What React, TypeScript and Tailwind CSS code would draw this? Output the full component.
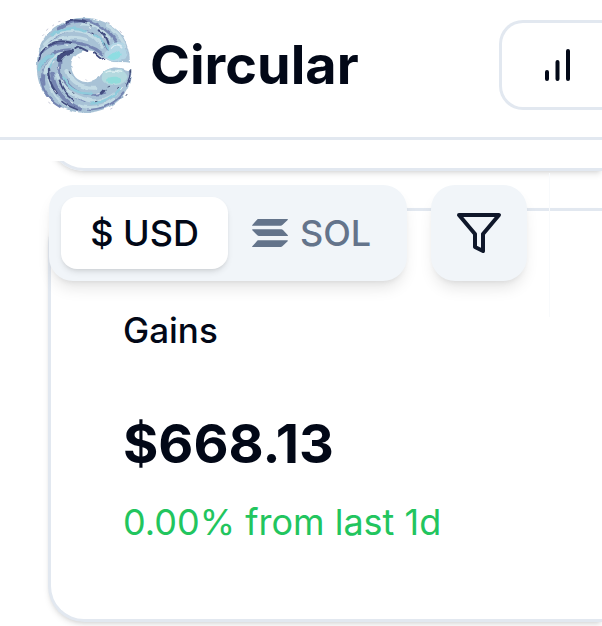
import React, { useState } from 'react';

function CircularLogo() {
  return (
    <svg viewBox="48 50 288 288" className="h-24 w-24 shrink-0" fill="none" strokeLinecap="round" aria-hidden="true">
      <defs>
        <filter id="water" x="-5%" y="-5%" width="110%" height="110%" colorInterpolationFilters="sRGB">
          <feTurbulence type="fractalNoise" baseFrequency="0.04" numOctaves="2" seed="4" result="noise" />
          <feDisplacementMap in="SourceGraphic" in2="noise" scale="11" xChannelSelector="R" yChannelSelector="G" />
          <feGaussianBlur stdDeviation="2" />
        </filter>
      </defs>
      <g filter="url(#water)">
        {/* Base ring */}
        <path
          d="M330 188 C322 184 300 186 284 186 C268 184 254 176 240 164 C226 152 206 146 188 152 C164 160 152 178 154 200 C156 224 172 242 196 245 C216 248 230 236 244 222 C258 204 282 198 304 204 L326 210 L334 206 C336 234 326 264 306 290 C284 318 240 338 190 337 C130 335 78 300 58 250 C46 212 48 170 62 134 C84 88 134 52 190 52 C236 52 282 72 306 104 C322 128 330 160 330 188 Z"
          fill="#a8c2d6"
        />
        {/* Deep currents */}
        <g stroke="#7585b2">
          <path d="M84 128 C112 96 160 80 204 94 C234 104 250 126 262 150" strokeWidth="6" />
          <path d="M58 164 C84 128 118 124 148 126 C182 128 216 134 246 160" strokeWidth="9" />
          <path d="M60 202 C76 168 102 150 148 148" strokeWidth="8" />
          <path d="M72 252 C66 214 78 184 112 164" strokeWidth="9" />
          <path d="M96 220 C102 264 126 302 180 326" strokeWidth="12" />
          <path d="M120 184 C112 230 136 280 194 300" strokeWidth="9" />
          <path d="M138 238 C158 276 206 294 256 278" strokeWidth="5" />
          <path d="M118 84 C150 60 194 56 232 72" strokeWidth="9" />
          <path d="M230 76 C262 88 284 108 294 136" strokeWidth="9" />
          <path d="M204 326 C248 330 288 306 310 276" strokeWidth="6" />
          <path d="M62 232 C66 266 86 298 122 318" strokeWidth="6" />
        </g>
        {/* Bright currents */}
        <g stroke="#c3dbe5">
          <path d="M74 132 C110 92 144 84 190 94 C218 100 234 118 246 140" strokeWidth="10" />
          <path d="M68 148 C106 110 154 104 202 118" strokeWidth="9" />
          <path d="M74 218 C80 186 98 166 132 158" strokeWidth="9" />
          <path d="M84 238 C92 274 112 302 144 320" strokeWidth="5" />
          <path d="M110 220 C122 260 154 286 206 300 C236 306 264 296 288 278" strokeWidth="10" />
          <path d="M142 212 C154 244 184 264 226 262" strokeWidth="12" />
          <path d="M184 72 C222 70 254 90 268 116" strokeWidth="8" />
          <path d="M262 76 C290 92 306 112 314 138" strokeWidth="9" />
          <path d="M178 316 C218 328 254 316 282 296" strokeWidth="8" />
        </g>
        {/* Aqua water */}
        <g stroke="#8fcbdc">
          <path d="M94 104 C126 82 162 80 196 92" strokeWidth="9" />
          <path d="M58 208 C62 186 76 170 98 164" strokeWidth="11" />
          <path d="M84 206 C92 182 110 170 128 168" strokeWidth="5" />
          <path d="M130 234 C144 264 176 282 216 280" strokeWidth="7" />
          <path d="M222 104 C242 114 256 132 266 152" strokeWidth="6" />
          <path d="M214 310 C250 308 280 290 302 264" strokeWidth="7" />
        </g>
        {/* Shadows */}
        <g stroke="#434d80">
          <path d="M86 136 C110 118 134 122 156 128" strokeWidth="6" />
          <path d="M116 182 C122 164 138 156 154 154" strokeWidth="12" />
          <path d="M166 146 C180 134 190 148 202 152" strokeWidth="6" />
          <path d="M84 206 C84 234 94 258 110 278" strokeWidth="7" />
          <path d="M118 240 C126 266 142 286 160 298" strokeWidth="5" />
          <path d="M140 66 C158 58 180 60 196 66" strokeWidth="7" />
          <path d="M236 90 C250 98 262 114 266 130" strokeWidth="6" />
          <path d="M58 178 C60 162 68 150 78 142" strokeWidth="5" />
          <path d="M224 156 C234 166 242 172 250 176" strokeWidth="6" />
          <path d="M244 278 L252 270" strokeWidth="9" />
          <path d="M330 212 C332 226 328 240 320 254" strokeWidth="4" />
          <path d="M126 304 C140 316 158 322 172 328" strokeWidth="5" />
        </g>
        {/* Wave crests */}
        <path
          d="M258 176 C248 164 260 152 268 150 C264 136 278 120 294 124 C312 126 326 146 322 166 C318 180 304 180 292 182 C280 184 268 182 258 176 Z"
          fill="#b3d6e5"
        />
        <path d="M262 172 C272 156 288 160 296 152 C306 160 302 172 288 178 C278 180 268 178 262 172 Z" fill="#8edde2" />
        <path d="M274 142 C282 130 298 130 308 142" stroke="#dcebf3" strokeWidth="5" />
        <path
          d="M246 228 C248 208 268 204 282 208 C300 202 318 214 322 228 C324 244 306 256 286 254 C264 256 240 246 246 228 Z"
          fill="#b4d9df"
        />
        <path d="M258 238 C266 228 290 226 304 234 C308 246 296 252 280 250 C266 250 258 246 258 238 Z" fill="#91dcdb" />
        <path d="M258 216 C272 210 290 212 302 216" stroke="#dceef1" strokeWidth="4" />
        {/* Open centre with its spray */}
        <path
          d="M160 182 L168 184 L170 168 L180 164 L186 156 L194 164 L204 156 L212 164 L224 162 L236 172 L250 180 L272 186 L300 186 L340 188 L336 206 L300 200 L276 198 L258 202 L244 212 L240 228 L228 232 L222 240 L212 234 L204 244 L196 236 L184 240 L176 230 L164 226 L166 212 L156 206 L162 194 Z"
          fill="#fff"
        />
      </g>
      {/* Spray */}
      <g stroke="#ffffff" strokeWidth="4" opacity="0.7">
        <path d="M208 82 l4 2 M246 106 l3 6 M138 134 l5 1 M116 200 l-2 6 M98 188 l4 -5 M230 282 l7 -2 M302 268 l5 -7 M152 304 l6 4 M104 270 l4 6" strokeWidth="3" />
        <path d="M66 120 l8 -12 M94 78 l10 -10 M58 270 l8 12 M94 318 l10 6 M316 278 l8 -10" />
      </g>
      <g stroke="#8b8fae" strokeWidth="3" opacity="0.5">
        <path d="M68 106 l3 -3 M80 90 l3 -4 M98 76 l3 -2 M116 64 l4 -1 M264 66 l5 3 M300 92 l4 5 M86 306 l4 3 M272 326 l4 -2 M176 170 l2 3 M198 238 l2 2" />
      </g>
      <g stroke="#303860" strokeWidth="3" opacity="0.8">
        <path d="M210 74 l5 3 M216 98 l4 3 M148 214 l3 6 M264 260 l5 -2 M292 264 l4 -3 M226 304 l5 -1 M158 276 l4 4 M252 128 l3 6 M128 158 l8 -4 M332 208 l0 8 M318 286 l3 -4" />
      </g>
    </svg>
  );
}

function SolIcon() {
  return (
    <svg viewBox="0 0 108 84" className="h-7 w-9" fill="currentColor" aria-hidden="true">
      <path d="M18 0 H106 Q109 0 107 3 L91 18 Q89 20 86 20 H2 Q-1 20 1 18 L15 2 Q16 0 18 0 Z" />
      <path d="M2 31 H88 Q91 31 93 33 L107 48 Q109 51 106 51 H21 Q18 51 16 49 L1 34 Q-1 31 2 31 Z" />
      <path d="M18 64 H106 Q109 64 107 67 L91 82 Q89 84 86 84 H2 Q-1 84 1 82 L15 66 Q16 64 18 64 Z" />
    </svg>
  );
}

export default function App() {
  const [currency, setCurrency] = useState<'USD' | 'SOL'>('USD');

  const tabClass = (active: boolean) =>
    active
      ? 'flex items-center justify-center rounded-2xl bg-white text-[#020817] shadow-md'
      : 'flex items-center justify-center gap-3 rounded-2xl text-[#64748b]';

  return (
    <div className="overflow-hidden bg-white pb-1 font-['Inter',sans-serif] text-[#020817]">
      {/* Header */}
      <header className="flex items-center justify-between border-b-3 border-[#e2e8f0] pt-[17px] pb-6 pl-9">
        <a href="#" className="flex items-center gap-[18px]">
          <CircularLogo />
          <span className="text-[54px] leading-16 font-bold">Circular</span>
        </a>
        <button
          aria-label="Statistics"
          className="flex h-[90px] w-[103px] items-center rounded-l-3xl border-3 border-r-0 border-[#e2e8f0] pl-10"
        >
          <svg viewBox="0 0 36 36" className="h-9 w-9" fill="none" stroke="currentColor" strokeWidth="4" strokeLinecap="round">
            <path d="M5 25 V32 M15.5 15 V32 M26 4 V32" />
          </svg>
        </button>
      </header>

      <main className="relative mt-[21px]">
        <div className="overflow-hidden pb-1 pl-12">
          {/* Previous card, scrolled away */}
          <section className="-mt-20 h-[90px] rounded-l-[36px] border-3 border-r-0 border-[#e2e8f0] shadow-md" />

          {/* Gains card */}
          <section className="mt-[37px] rounded-l-[36px] border-3 border-r-0 border-[#e2e8f0] bg-white pt-[101px] pb-[73px] pl-18 shadow-md">
            <h3 className="text-[35px] leading-9 font-medium">Gains</h3>
            <div className="mt-16 text-[54px] leading-16 font-bold">$668.13</div>
            <p className="mt-[22px] text-4xl leading-12 text-[#22c55e]">0.00% from last 1d</p>
          </section>
        </div>

        {/* Floating toolbar */}
        <div className="absolute top-3 left-0 flex gap-6 border-r border-slate-50 pt-3 pr-[22px] pb-9 pl-[49px]">
          <div className="grid h-24 w-[358px] grid-cols-2 rounded-3xl bg-[#f1f5f9] p-3 text-4xl font-medium shadow-lg">
            <button className={tabClass(currency === 'USD')} onClick={() => setCurrency('USD')}>
              $ USD
            </button>
            <button className={tabClass(currency === 'SOL')} onClick={() => setCurrency('SOL')}>
              <SolIcon />
              SOL
            </button>
          </div>
          <button
            aria-label="Filter"
            className="flex h-24 w-24 items-center justify-center rounded-3xl bg-[#f1f5f9] text-[#0f172a] shadow-lg"
          >
            <svg viewBox="0 0 24 24" className="h-12 w-12" fill="none" stroke="currentColor" strokeWidth="2" strokeLinecap="round" strokeLinejoin="round">
              <polygon points="22 3 2 3 10 12.46 10 19 14 21 14 12.46 22 3" />
            </svg>
          </button>
        </div>
      </main>
    </div>
  );
}
